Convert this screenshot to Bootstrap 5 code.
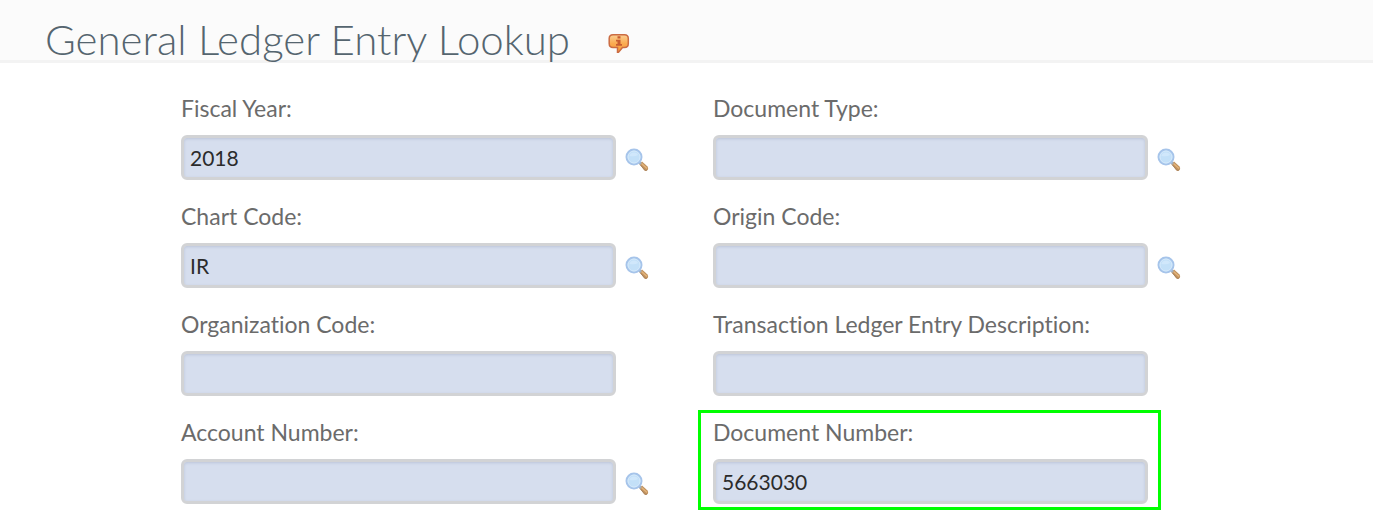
<!DOCTYPE html>
<html lang="en">
<head>
<meta charset="utf-8">
<meta name="viewport" content="width=device-width, initial-scale=1">
<title>General Ledger Entry Lookup</title>
<link href="https://cdn.jsdelivr.net/npm/bootstrap@5.3.0/dist/css/bootstrap.min.css" rel="stylesheet">
<style>
  body { font-family: Lato, "Open Sans", sans-serif; font-variant-ligatures: no-common-ligatures; background: #fff; overflow-x: hidden; }
  .page-head { background: #fbfbfb; border-bottom: 3px solid #f3f3f3; height: 63px; padding: 0 45px; }
  .page-head h1 { font-size: 42px; font-weight: 300; line-height: 48px; color: #55656f; padding-top: 15px; }
  .help-btn { margin-left: 38px; margin-top: 26px; }
  .lookup-form { padding: 31px 128px 0 181px; }
  .form-label { font-size: 23px; line-height: 28px; color: #6b6b6b; margin-bottom: 13px; }
  .lookup-field { height: 108px; padding-right: 97px; }
  .field-box { position: relative; }
  .field-box .form-control { height: 45px; padding: 0 6px; font-size: 21px; line-height: 28px; color: #2b2b2b;
    background: #d6deee; border: 3px solid #d2d3d5; border-radius: 6px; box-shadow: inset 0 1px 3px #bcc5d9; }
  .lookup-btn { position: absolute; left: 100%; bottom: 8px; margin-left: 9px; }
  .marked::after { content: ""; position: absolute; inset: -8px -13px -6px -15px; border: 3px solid #0f0; pointer-events: none; }
</style>
</head>
<body>
<svg class="d-none" xmlns="http://www.w3.org/2000/svg">
  <symbol id="lens" viewBox="0 0 24 24">
    <path d="M14.500 16 17 13.500 22.500 18.500Q24 21 22 22.500 20.500 23.500 19 22Z" fill="#c0915d"/>
    <path d="M16.500 15.500 22 20.500" stroke="#e3b47b" stroke-width="1.500"/>
    <path d="M15 16.500 19.500 21.800Q20.500 22.800 21.800 22.300" stroke="#a98460" fill="none"/>
    <path d="M14 14 16 16" stroke="#a3aebb" stroke-width="2.500"/>
    <circle cx="9" cy="9" r="7.500" fill="#c3e0f8" stroke="#a6c4ea" stroke-width="2"/>
    <circle cx="9" cy="9" r="6" fill="none" stroke="#d5e9fb"/>
    <path d="M4.500 8Q5 4.500 9 4.500 12.500 4.500 13 7 10 9 4.500 8Z" fill="#d0e7fb"/>
  </symbol>
</svg>

<header class="page-head d-flex align-items-start">
  <h1 class="mb-0 text-nowrap">General Ledger Entry Lookup</h1>
  <button type="button" class="btn p-0 border-0 help-btn lh-1" aria-label="Help">
    <svg class="d-block" width="22" height="34" viewBox="0 0 22 34">
      <defs><linearGradient id="bubble" x2="0" y2="1"><stop stop-color="#fad094"/><stop offset=".5" stop-color="#fbab51"/><stop offset="1" stop-color="#f99b35"/></linearGradient></defs>
      <path d="M5 8.700H16.500Q20.300 8.700 20.300 12.500V17.500Q20.300 21.500 16.500 21.500H14.500L10.500 26.300H9.500V21.500H5Q1.200 21.500 1.200 17.500V12.500Q1.200 8.700 5 8.700Z" fill="url(#bubble)" stroke="#cb6c43" stroke-width="1.500"/>
      <path d="M9.500 10.200H12.500V12.500H9.500ZM8 13.800H12.500V18H14V19.800H8V18H9.500V15.500H8Z" fill="#c85c31"/>
    </svg>
  </button>
</header>

<main>
  <form class="lookup-form">
    <div class="row g-0">
      <div class="col-6 lookup-field"><div class="field-box">
        <label class="form-label d-block text-nowrap" for="year">Fiscal Year:</label>
        <input class="form-control" id="year" type="text" value="2018">
        <button type="button" class="btn p-0 border-0 lookup-btn" aria-label="Search fiscal year"><svg class="d-block" width="24" height="24"><use href="#lens"/></svg></button>
      </div></div>
      <div class="col-6 lookup-field"><div class="field-box">
        <label class="form-label d-block text-nowrap" for="doctype">Document Type:</label>
        <input class="form-control" id="doctype" type="text">
        <button type="button" class="btn p-0 border-0 lookup-btn" aria-label="Search document type"><svg class="d-block" width="24" height="24"><use href="#lens"/></svg></button>
      </div></div>
      <div class="col-6 lookup-field"><div class="field-box">
        <label class="form-label d-block text-nowrap" for="chart">Chart Code:</label>
        <input class="form-control" id="chart" type="text" value="IR">
        <button type="button" class="btn p-0 border-0 lookup-btn" aria-label="Search chart code"><svg class="d-block" width="24" height="24"><use href="#lens"/></svg></button>
      </div></div>
      <div class="col-6 lookup-field"><div class="field-box">
        <label class="form-label d-block text-nowrap" for="origin">Origin Code:</label>
        <input class="form-control" id="origin" type="text">
        <button type="button" class="btn p-0 border-0 lookup-btn" aria-label="Search origin code"><svg class="d-block" width="24" height="24"><use href="#lens"/></svg></button>
      </div></div>
      <div class="col-6 lookup-field"><div class="field-box">
        <label class="form-label d-block text-nowrap" for="org">Organization Code:</label>
        <input class="form-control" id="org" type="text">
      </div></div>
      <div class="col-6 lookup-field"><div class="field-box">
        <label class="form-label d-block text-nowrap" for="desc">Transaction Ledger Entry Description:</label>
        <input class="form-control" id="desc" type="text">
      </div></div>
      <div class="col-6 lookup-field"><div class="field-box">
        <label class="form-label d-block text-nowrap" for="account">Account Number:</label>
        <input class="form-control" id="account" type="text">
        <button type="button" class="btn p-0 border-0 lookup-btn" aria-label="Search account number"><svg class="d-block" width="24" height="24"><use href="#lens"/></svg></button>
      </div></div>
      <div class="col-6 lookup-field"><div class="field-box marked">
        <label class="form-label d-block text-nowrap" for="docnum">Document Number:</label>
        <input class="form-control" id="docnum" type="text" value="5663030">
      </div></div>
    </div>
  </form>
</main>
<script src="https://cdn.jsdelivr.net/npm/bootstrap@5.3.0/dist/js/bootstrap.bundle.min.js"></script>
</body>
</html>
